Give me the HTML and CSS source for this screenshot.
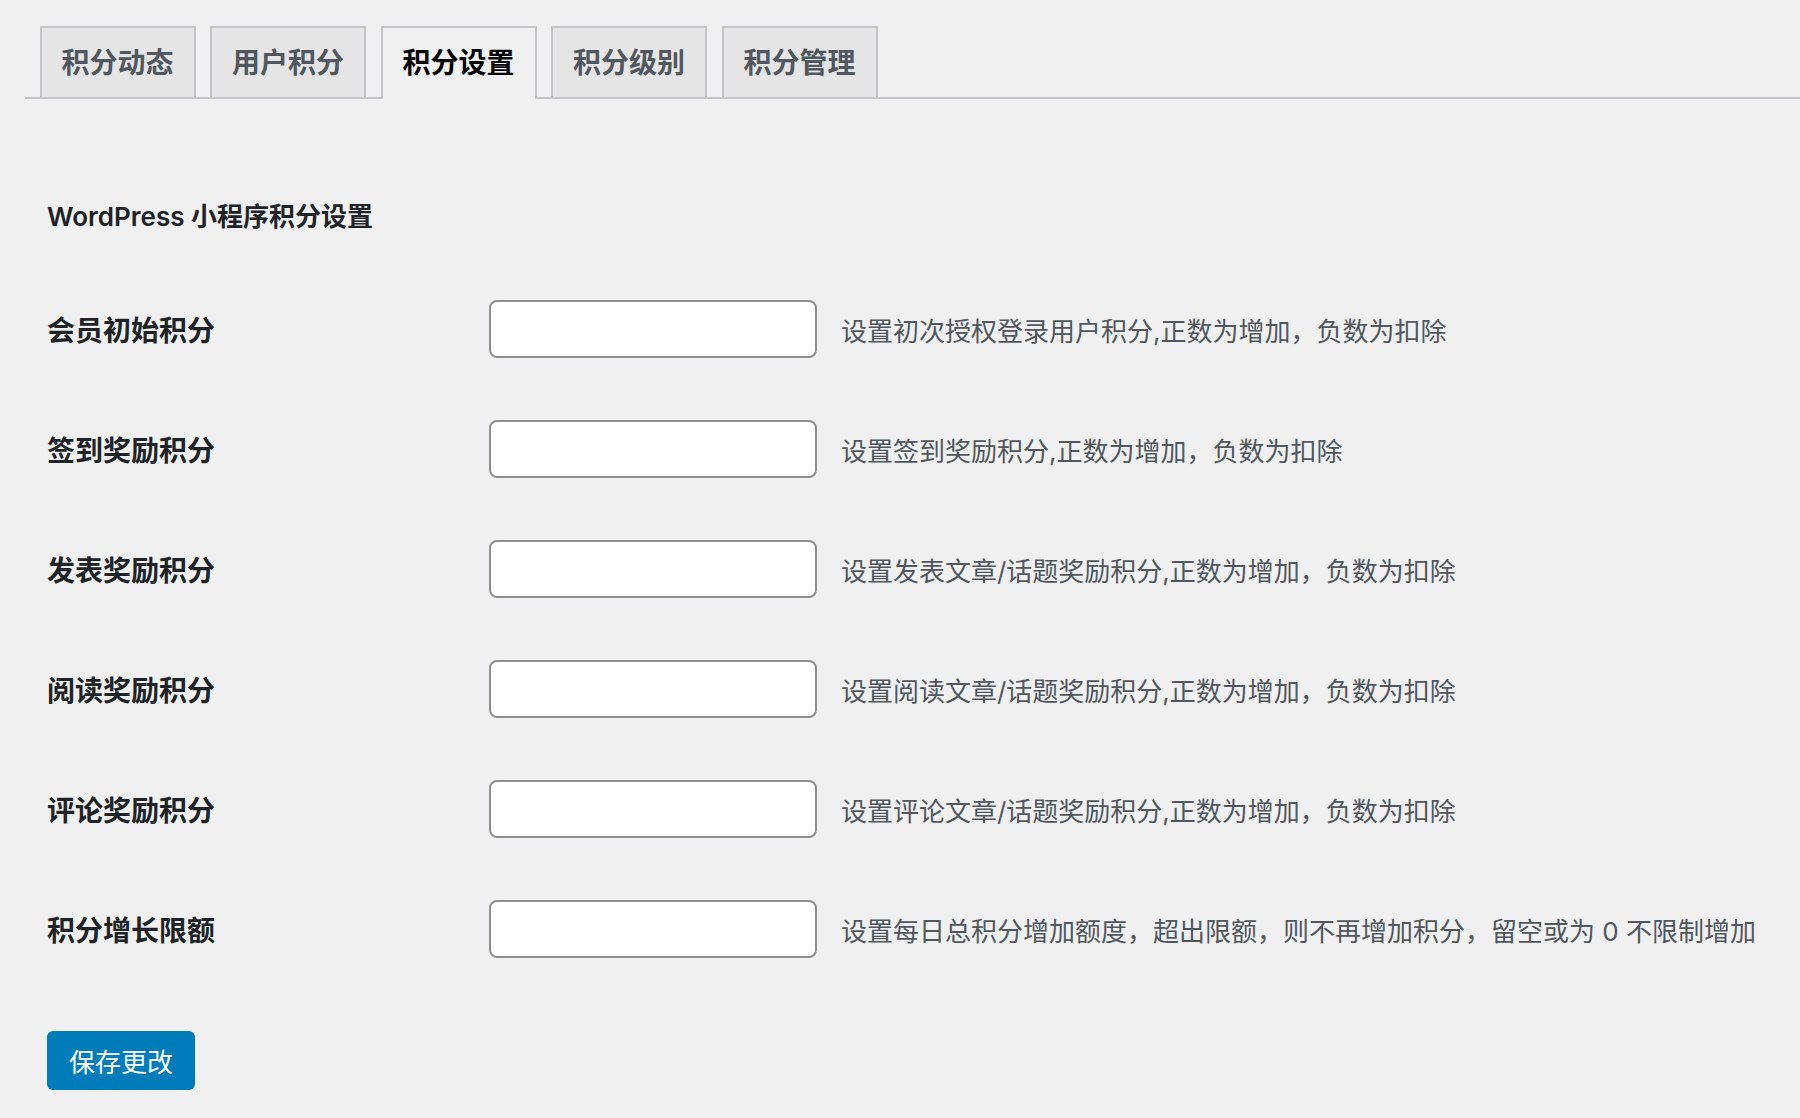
FILE: index.html
```html
<!DOCTYPE html>
<html lang="zh-CN">
<head>
<meta charset="utf-8">
<title>积分设置</title>
<link rel="stylesheet" href="styles.css">
</head>
<body>
<div class="wrap">
  <nav class="nav-tab-wrapper">
    <a class="nav-tab">积分动态</a>
    <a class="nav-tab">用户积分</a>
    <a class="nav-tab nav-tab-active">积分设置</a>
    <a class="nav-tab">积分级别</a>
    <a class="nav-tab">积分管理</a>
  </nav>
  <form class="settings">
    <h2 class="title">WordPress 小程序积分设置</h2>
    <div class="form-table">
      <div class="row">
        <label class="label">会员初始积分</label>
        <input class="field" type="text">
        <span class="description">设置初次授权登录用户积分,正数为增加，负数为扣除</span>
      </div>
      <div class="row">
        <label class="label">签到奖励积分</label>
        <input class="field" type="text">
        <span class="description">设置签到奖励积分,正数为增加，负数为扣除</span>
      </div>
      <div class="row">
        <label class="label">发表奖励积分</label>
        <input class="field" type="text">
        <span class="description">设置发表文章/话题奖励积分,正数为增加，负数为扣除</span>
      </div>
      <div class="row">
        <label class="label">阅读奖励积分</label>
        <input class="field" type="text">
        <span class="description">设置阅读文章/话题奖励积分,正数为增加，负数为扣除</span>
      </div>
      <div class="row">
        <label class="label">评论奖励积分</label>
        <input class="field" type="text">
        <span class="description">设置评论文章/话题奖励积分,正数为增加，负数为扣除</span>
      </div>
      <div class="row">
        <label class="label">积分增长限额</label>
        <input class="field" type="text">
        <span class="description">设置每日总积分增加额度，超出限额，则不再增加积分，留空或为 0 不限制增加</span>
      </div>
    </div>
    <div class="submit">
      <button type="button" class="button-primary">保存更改</button>
    </div>
  </form>
</div>
</body>
</html>
```

FILE: styles.css
```css
html, body {
  margin: 0;
  padding: 0;
  background: #f0f0f1;
}
body {
  font-family: Inter, "Noto Sans CJK SC", sans-serif;
  color: #1d2327;
}
.wrap {
  padding: 26px 0 0 25px;
}
.nav-tab-wrapper {
  display: flex;
  border-bottom: 2px solid #c3c4c7;
}
.nav-tab {
  display: block;
  margin-left: 14.5px;
  padding: 11px 20px 10px;
  border: 2px solid #c3c4c7;
  border-bottom: none;
  background: #e5e5e5;
  color: #50575e;
  font-size: 28px;
  font-weight: 700;
  line-height: 48px;
  white-space: nowrap;
}
.nav-tab-active {
  background: #f0f0f1;
  color: #000;
  margin-bottom: -2px;
  padding-bottom: 12px;
}
.settings {
  padding-left: 22px;
}
.title {
  margin: 100px 0 0;
  font-size: 26px;
  line-height: 36px;
  font-weight: 600;
  color: #1d2327;
}
.form-table {
  margin-top: 34px;
}
.row {
  display: flex;
  align-items: center;
  height: 120px;
}
.label {
  width: 442px;
  flex: none;
  font-size: 28px;
  font-weight: 700;
  color: #1d2327;
}
.field {
  box-sizing: border-box;
  width: 328px;
  height: 58px;
  flex: none;
  margin: 0;
  border: 2px solid #8c8f94;
  border-radius: 8px;
  background: #fff;
}
.description {
  margin-left: 24px;
  font-size: 26px;
  color: #50575e;
  white-space: nowrap;
}
.submit {
  margin-top: 42px;
}
.button-primary {
  box-sizing: border-box;
  width: 148px;
  height: 59px;
  padding: 0;
  border: none;
  border-radius: 6px;
  background: #007cba;
  color: #fff;
  font-family: Inter, "Noto Sans CJK SC", sans-serif;
  font-size: 26px;
  cursor: pointer;
}
```
